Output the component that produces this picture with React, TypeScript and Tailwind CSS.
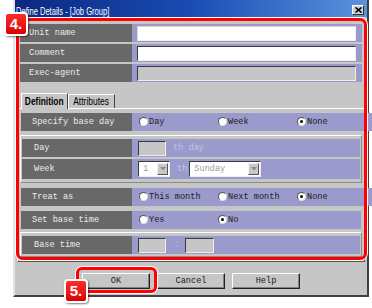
import React from "react";

const mono = { fontFamily: '"Liberation Mono", "DejaVu Sans Mono", monospace' } as React.CSSProperties;
const sans = { fontFamily: '"Liberation Sans", Arial, sans-serif' } as React.CSSProperties;

function Label({ children, pl = "pl-[9px]", w = "w-[112px]" }: { children: React.ReactNode; pl?: string; w?: string }) {
  return (
    <div className={`${w} ${pl} shrink-0 bg-[#686868] text-[#ececec] flex items-center text-[8.6px]`} style={mono}>
      {children}
    </div>
  );
}

function Radio({ label, checked = false }: { label: string; checked?: boolean }) {
  return (
    <div className="w-[79px] flex items-center gap-[1px] text-[8.6px] text-[#1a1a1a]" style={mono}>
      <span className="w-[9px] h-[9px] rounded-full bg-white border border-t-[#555] border-l-[#555] border-r-[#ddd] border-b-[#ddd] flex items-center justify-center">
        {checked && <span className="w-[3px] h-[3px] rounded-full bg-black" />}
      </span>
      <span>{label}</span>
    </div>
  );
}

function Sunken({ className = "", children }: { className?: string; children?: React.ReactNode }) {
  return (
    <div className={`border border-t-[#3a3a3a] border-l-[#3a3a3a] border-r-[#eeeeee] border-b-[#eeeeee] ${className}`}>
      {children}
    </div>
  );
}

function Combo({ value, w }: { value: string; w: string }) {
  return (
    <Sunken className={`${w} h-[16px] bg-white flex items-center`}>
      <span className="flex-1 pl-[4px] text-[8.6px] text-[#9a9a9a]" style={mono}>{value}</span>
      <span className="w-[11px] h-[12px] mr-[1px] bg-[#c8c8c8] border border-t-[#f4f4f4] border-l-[#f4f4f4] border-r-[#555] border-b-[#555] flex items-center justify-center">
        <svg width="6" height="4" viewBox="0 0 6 4"><path d="M0 0h6L3 3.5z" fill="#8a8a8a" /></svg>
      </span>
    </Sunken>
  );
}

function Btn({ children }: { children: React.ReactNode }) {
  return (
    <div className="w-[68px] h-[16px] border border-t-white border-l-white border-r-[#222] border-b-[#222] bg-[#c6c6c6] flex items-center justify-center text-[8.6px] text-[#1a1a1a] shadow-[inset_-1px_-1px_0_#808080]" style={mono}>
      {children}
    </div>
  );
}

function Badge({ text, className }: { text: string; className: string }) {
  return (
    <div
      className={`absolute w-[24px] h-[24px] rounded-[4px] border-2 border-white bg-gradient-to-b from-[#ff2a2a] to-[#d80000] text-white font-bold text-[15px] flex items-center justify-center shadow-[1px_1px_2px_rgba(0,0,0,0.5)] ${className}`}
      style={sans}
    >
      {text}
    </div>
  );
}

export default function App() {
  return (
    <div className="relative w-[372px] h-[308px] bg-white overflow-hidden">
      <div className="ml-[13px] w-[356px] h-[297px] bg-[#c6c6c6] border-l-2 border-l-[#e4e4e4] border-r-2 border-r-[#404040] border-b-2 border-b-[#404040] flex flex-col">
        {/* title bar */}
        <div className="h-[17px] bg-gradient-to-r from-[#0a2880] via-[#1a4cb4] to-[#5c92dc] flex items-center pl-[1px] pr-[3px]">
          <div className="flex-1 overflow-hidden">
            <span className="inline-block origin-left scale-x-[0.72] whitespace-nowrap text-white text-[10.5px] leading-none" style={sans}>Define Details - [Job Group]</span>
          </div>
          <span className="mt-[3px] w-[12px] h-[10px] bg-[#d0d0d0] border border-t-white border-l-white border-r-[#333] border-b-[#333] flex items-center justify-center">
            <svg width="7" height="6" viewBox="0 0 7 6"><path d="M0.5 0.5L6.5 5.5M6.5 0.5L0.5 5.5" stroke="#000" strokeWidth="1.6" /></svg>
          </span>
        </div>

        {/* top rows */}
        <div className="mt-[7px] mx-[5px] flex flex-col gap-[2px]">
          <div className="flex h-[18px]">
            <Label>Unit name</Label>
            <div className="flex-1 bg-[#9a9acc] flex items-center pl-[5px] pr-[6px]">
              <Sunken className="flex-1 h-[15px] bg-white border-t-[#d8d8d8] border-l-[#d8d8d8]" />
            </div>
          </div>
          <div className="flex h-[18px]">
            <Label>Comment</Label>
            <div className="flex-1 bg-[#9a9acc] flex items-center pl-[5px] pr-[6px]">
              <Sunken className="flex-1 h-[15px] bg-white" />
            </div>
          </div>
          <div className="flex h-[18px]">
            <Label>Exec-agent</Label>
            <div className="flex-1 bg-[#9a9acc] flex items-center pl-[5px] pr-[6px]">
              <Sunken className="flex-1 h-[15px] bg-[#c6c6c6]" />
            </div>
          </div>
        </div>

        {/* tabs */}
        <div className="mt-[10px] ml-[6px] flex items-end h-[16px]">
          <div className="w-[47px] h-[16px] border border-b-0 border-t-white border-l-white border-r-[#444] bg-[#c6c6c6] flex items-center justify-center overflow-hidden relative z-10 -mb-[1px]">
            <span className="inline-block scale-x-[0.8] whitespace-nowrap text-[10.5px] font-bold text-black" style={sans}>Definition</span>
          </div>
          <div className="w-[47px] h-[14px] border border-b-0 border-t-white border-l-white border-r-[#444] bg-[#c6c6c6] flex items-center justify-center overflow-hidden">
            <span className="inline-block scale-x-[0.85] whitespace-nowrap text-[10px] text-black" style={sans}>Attributes</span>
          </div>
        </div>

        {/* panel */}
        <div className="mx-[2px] h-[154px] border border-t-white border-l-white border-r-[#555] border-b-[#555] flex flex-col px-[3px] pt-[4px]">
          <div className="flex h-[18px]">
            <Label pl="pl-[11px]" w="w-[111px]">Specify base day</Label>
            <div className="flex-1 bg-[#9a9acc] flex items-center pl-[7px]">
              <Radio label="Day" />
              <Radio label="Week" />
              <Radio label="None" checked />
            </div>
          </div>

          <div className="mt-[4px] -mx-[1px] border border-t-white border-l-white border-r-[#8a8a8a] border-b-[#8a8a8a] px-[1px] pt-[3px] pb-[3px] flex flex-col gap-[2px]">
            <div className="flex h-[18px]">
              <Label pl="pl-[12px]" w="w-[110px]">Day</Label>
              <div className="flex-1 bg-[#9a9acc] flex items-center pl-[6px]">
                <Sunken className="w-[28px] h-[15px] bg-[#c6c6c6]" />
                <span className="ml-[7px] text-[8.6px] text-[#c4c4e2]" style={mono}>th day</span>
              </div>
            </div>
            <div className="flex h-[20px]">
              <Label pl="pl-[12px]" w="w-[110px]">Week</Label>
              <div className="flex-1 bg-[#9a9acc] flex items-center pl-[6px]">
                <Combo value="1" w="w-[32px]" />
                <span className="ml-[7px] text-[8.6px] text-[#c4c4e2]" style={mono}>th</span>
                <span className="ml-[2px]"><Combo value="Sunday" w="w-[72px]" /></span>
              </div>
            </div>
          </div>

          <div className="mt-[5px] flex h-[18px]">
            <Label pl="pl-[11px]" w="w-[111px]">Treat as</Label>
            <div className="flex-1 bg-[#9a9acc] flex items-center pl-[7px]">
              <Radio label="This month" />
              <Radio label="Next month" />
              <Radio label="None" checked />
            </div>
          </div>
          <div className="mt-[5px] flex h-[18px]">
            <Label pl="pl-[11px]" w="w-[111px]">Set base time</Label>
            <div className="flex-1 bg-[#9a9acc] flex items-center pl-[7px]">
              <Radio label="Yes" />
              <Radio label="No" checked />
            </div>
          </div>

          <div className="mt-[3px] -mx-[1px] border border-t-white border-l-white border-r-[#8a8a8a] border-b-[#8a8a8a] px-[1px] pt-[3px] pb-[2px]">
            <div className="flex h-[18px]">
              <Label pl="pl-[12px]" w="w-[110px]">Base time</Label>
              <div className="flex-1 bg-[#9a9acc] flex items-center pl-[6px]">
                <Sunken className="w-[28px] h-[15px] bg-[#c6c6c6]" />
                <span className="ml-[9px] text-[8.6px] text-[#c4c4e2]" style={mono}>:</span>
                <span className="ml-[5px]"><Sunken className="w-[29px] h-[15px] bg-[#c6c6c6]" /></span>
              </div>
            </div>
          </div>
        </div>

        {/* buttons */}
        <div className="mt-[11px] ml-[67px] flex gap-[7px]">
          <Btn>OK</Btn>
          <Btn>Cancel</Btn>
          <Btn>Help</Btn>
        </div>
      </div>

      {/* annotations */}
      <div className="absolute left-[16px] top-[18px] w-[351px] h-[242px] border-[3px] border-[#ff0000] rounded-[7px] shadow-[0_0_0_1px_#ffffff]" />
      <div className="absolute left-[76px] top-[267px] w-[81px] h-[26px] border-[3px] border-[#ff0000] rounded-[6px] shadow-[0_0_0_1px_#ffffff]" />
      <Badge text="4." className="left-[4px] top-[12px]" />
      <Badge text="5." className="left-[64px] top-[279px]" />
    </div>
  );
}
